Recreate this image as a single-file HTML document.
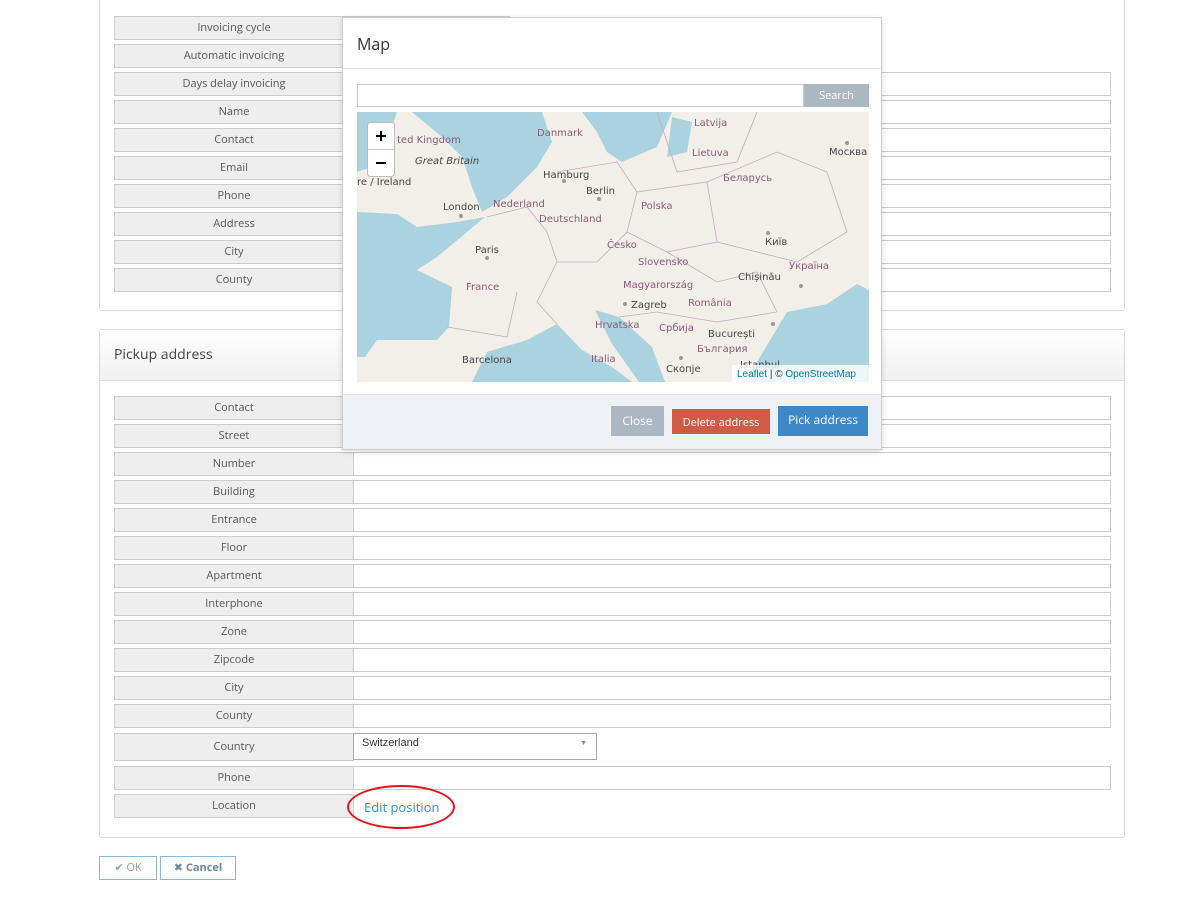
<!DOCTYPE html>
<html><head><meta charset="utf-8"><style>
*{box-sizing:border-box;margin:0;padding:0}
body{width:1185px;height:900px;background:#fff;font-family:"Open Sans","DejaVu Sans","Liberation Sans",sans-serif;position:relative;overflow:hidden;color:#555}
.abs{position:absolute}
.panel{position:absolute;border:1px solid #ddd;border-radius:3px;background:#fff}
.lbl{position:absolute;left:114px;width:240px;height:24px;background:#eee;border:1px solid #ccc;font-size:11px;line-height:22px;text-align:center;color:#555}
.inp{position:absolute;left:353px;width:758px;height:24px;border:1px solid #ccc;background:#fff}
.mp text{font-family:"DejaVu Sans",sans-serif;font-size:10px;fill:#8a5a7a}
.mp text.c{fill:#444}
.btn{position:absolute;color:#fff;font-size:12px;text-align:center}
</style></head><body>
<div class="panel" style="left:99px;top:-2px;width:1026px;height:313px"></div>
<div class="abs" style="left:353px;top:16px;width:157px;height:24px;border:1px solid #ccc"></div>
<div class="lbl" style="top:16px">Invoicing cycle</div>
<div class="lbl" style="top:44px">Automatic invoicing</div>
<div class="inp" style="top:72px"></div><div class="lbl" style="top:72px">Days delay invoicing</div>
<div class="inp" style="top:100px"></div><div class="lbl" style="top:100px">Name</div>
<div class="inp" style="top:128px"></div><div class="lbl" style="top:128px">Contact</div>
<div class="inp" style="top:156px"></div><div class="lbl" style="top:156px">Email</div>
<div class="inp" style="top:184px"></div><div class="lbl" style="top:184px">Phone</div>
<div class="inp" style="top:212px"></div><div class="lbl" style="top:212px">Address</div>
<div class="inp" style="top:240px"></div><div class="lbl" style="top:240px">City</div>
<div class="inp" style="top:268px"></div><div class="lbl" style="top:268px">County</div>

<div class="panel" style="left:99px;top:329px;width:1026px;height:509px"></div>
<div class="abs" style="left:100px;top:330px;width:1024px;height:51px;background:linear-gradient(#fff,#f0f0f0);border-bottom:1px solid #ddd;font-size:14px;line-height:50px;padding-left:14px;color:#444">Pickup address</div>
<div class="inp" style="top:396px"></div><div class="lbl" style="top:396px">Contact</div>
<div class="inp" style="top:424px"></div><div class="lbl" style="top:424px">Street</div>
<div class="inp" style="top:452px"></div><div class="lbl" style="top:452px">Number</div>
<div class="inp" style="top:480px"></div><div class="lbl" style="top:480px">Building</div>
<div class="inp" style="top:508px"></div><div class="lbl" style="top:508px">Entrance</div>
<div class="inp" style="top:536px"></div><div class="lbl" style="top:536px">Floor</div>
<div class="inp" style="top:564px"></div><div class="lbl" style="top:564px">Apartment</div>
<div class="inp" style="top:592px"></div><div class="lbl" style="top:592px">Interphone</div>
<div class="inp" style="top:620px"></div><div class="lbl" style="top:620px">Zone</div>
<div class="inp" style="top:648px"></div><div class="lbl" style="top:648px">Zipcode</div>
<div class="inp" style="top:676px"></div><div class="lbl" style="top:676px">City</div>
<div class="inp" style="top:704px"></div><div class="lbl" style="top:704px">County</div>
<div class="lbl" style="top:733px;height:28px;line-height:26px">Country</div>
<div class="abs" style="left:353px;top:733px;width:244px;height:27px;border:1px solid #aaa;font-family:'Liberation Sans',sans-serif;font-size:11px;color:#333;padding:3px 8px">Switzerland<span style="position:absolute;right:9px;top:6px;font-size:7px;color:#888">▼</span></div>
<div class="inp" style="top:766px"></div><div class="lbl" style="top:766px">Phone</div>
<div class="lbl" style="top:794px">Location</div>
<div class="abs" style="left:364px;top:798px;font-size:13px;color:#2a8fd0">Edit position</div>
<div class="abs" style="left:347px;top:785px;width:108px;height:44px;border:2px solid #e3151a;border-radius:50%"></div>

<div class="abs" style="left:99px;top:856px;width:58px;height:24px;border:1px solid #8fb8d8;font-size:11px;line-height:22px;color:#8aa0b5;text-align:center">✔ OK</div>
<div class="abs" style="left:160px;top:856px;width:76px;height:24px;border:1px solid #8fb8d8;font-size:11px;line-height:22px;color:#6a86a2;text-align:center;font-weight:bold">✖ Cancel</div>

<div class="abs" style="left:342px;top:17px;width:540px;height:433px;background:#fff;border:1px solid #ccc;box-shadow:0 2px 6px rgba(0,0,0,.15)">
 <div class="abs" style="left:0;top:0;width:538px;height:51px;border-bottom:1px solid #e5e5e5;font-size:16px;color:#333;padding:15px 0 0 14px">Map</div>
 <div class="abs" style="left:14px;top:66px;width:447px;height:23px;border:1px solid #ccc"></div>
 <div class="abs" style="left:461px;top:66px;width:65px;height:23px;background:#acb8c1;color:#fff;font-size:11px;line-height:23px;text-align:center">Search</div>
 <svg class="abs mp" style="left:14px;top:94px" width="512" height="270" viewBox="0 0 512 270">
  <rect width="512" height="270" fill="#f2efe9"/>
  <g fill="#aad3df">
   <path d="M0,0 L40,0 L30,30 L15,55 L0,60Z"/>
   <path d="M0,100 L40,102 L60,115 L100,110 L128,105 L80,145 L60,158 L95,175 L92,215 L80,228 L20,228 L8,245 L0,245Z"/>
   <path d="M55,0 L185,0 L195,30 L180,55 L150,85 L125,100 L115,75 L105,45 L85,25Z"/>
   <path d="M225,0 L315,0 L300,35 L265,50 L250,40 L240,20Z"/>
   <path d="M315,5 L335,10 L330,40 L310,45Z"/>
   <path d="M115,270 L130,240 L170,228 L200,212 L225,238 L255,255 L275,270Z"/>
   <path d="M238,198 L262,205 L295,235 L308,270 L282,270 L255,232Z"/>
   <path d="M388,270 L430,200 L470,192 L500,172 L512,178 L512,270Z"/>
  </g>
  <g fill="none" stroke="#c7a9c0" stroke-width=".8">
   <path d="M130,105 L170,95 L190,120 L200,150 L180,190 L200,212"/>
   <path d="M200,60 L260,50 L280,80 L270,120 L240,150 L200,150"/>
   <path d="M280,80 L350,70 L360,130 L310,140 L270,120"/>
   <path d="M350,70 L420,40 L470,60 L490,120 L440,150 L360,130"/>
   <path d="M310,140 L360,170 L400,160 L420,200 L360,210 L300,200 L262,205"/>
   <path d="M300,0 L320,60 L380,50 L400,0"/>
   <path d="M90,215 L150,225 L160,180"/>
  </g>
  <g fill="#999"><circle cx="104" cy="104" r="2"/><circle cx="130" cy="146" r="2"/><circle cx="242" cy="87" r="2"/><circle cx="268" cy="192" r="2"/><circle cx="411" cy="121" r="2"/><circle cx="444" cy="174" r="2"/><circle cx="416" cy="212" r="2"/><circle cx="490" cy="31" r="2"/><circle cx="324" cy="246" r="2"/><circle cx="207" cy="69" r="2"/></g>
  <text x="40" y="31">ted Kingdom</text><text x="58" y="52" class="c" font-style="italic" font-size="9">Great Britain</text>
  <text x="0" y="73" class="c">re / Ireland</text><text x="180" y="24">Danmark</text>
  <text x="337" y="14">Latvija</text><text x="335" y="44">Lietuva</text><text x="472" y="43" class="c">Москва</text>
  <text x="186" y="66" class="c">Hamburg</text><text x="229" y="82" class="c">Berlin</text><text x="366" y="69">Беларусь</text>
  <text x="86" y="98" class="c">London</text><text x="136" y="95">Nederland</text><text x="284" y="97">Polska</text>
  <text x="182" y="110">Deutschland</text><text x="250" y="136">Česko</text><text x="408" y="133" class="c">Київ</text>
  <text x="118" y="141" class="c">Paris</text><text x="281" y="153">Slovensko</text><text x="432" y="157">Україна</text>
  <text x="109" y="178">France</text><text x="266" y="176">Magyarország</text><text x="381" y="168" class="c">Chișinău</text>
  <text x="274" y="196" class="c">Zagreb</text><text x="331" y="194">România</text>
  <text x="238" y="216">Hrvatska</text><text x="302" y="219">Србија</text><text x="351" y="225" class="c">București</text>
  <text x="340" y="240">България</text><text x="105" y="251" class="c">Barcelona</text><text x="234" y="250">Italia</text>
  <text x="309" y="260" class="c">Скопје</text><text x="383" y="256" class="c">Istanbul</text>
  <rect x="375" y="253" width="137" height="17" fill="rgba(255,255,255,.8)"/>
  <text x="380" y="265" style="fill:#0078a8;font-family:'Liberation Sans',sans-serif;font-size:10px">Leaflet <tspan style="fill:#333">| ©</tspan> OpenStreetMap</text>
  <rect x="10.5" y="10.5" width="27" height="54" rx="3" fill="#fff" stroke="#bbb"/>
  <line x1="11" y1="37.5" x2="37" y2="37.5" stroke="#ccc"/>
  <path d="M19,24h10M24,19v10M19,51h10" stroke="#000" stroke-width="2"/>
 </svg>
 <div class="abs" style="left:0;top:376px;width:538px;height:55px;background:#eef1f5;border-top:1px solid #e0e4ea"></div>
 <div class="btn" style="left:268px;top:388px;width:53px;height:30px;line-height:30px;background:#acb8c1">Close</div>
 <div class="btn" style="left:329px;top:391px;width:98px;height:25px;line-height:28px;background:#d05a46;font-size:11px">Delete address</div>
 <div class="btn" style="left:435px;top:388px;width:90px;height:30px;line-height:28px;background:#3f88c8">Pick address</div>
</div>
</body></html>
